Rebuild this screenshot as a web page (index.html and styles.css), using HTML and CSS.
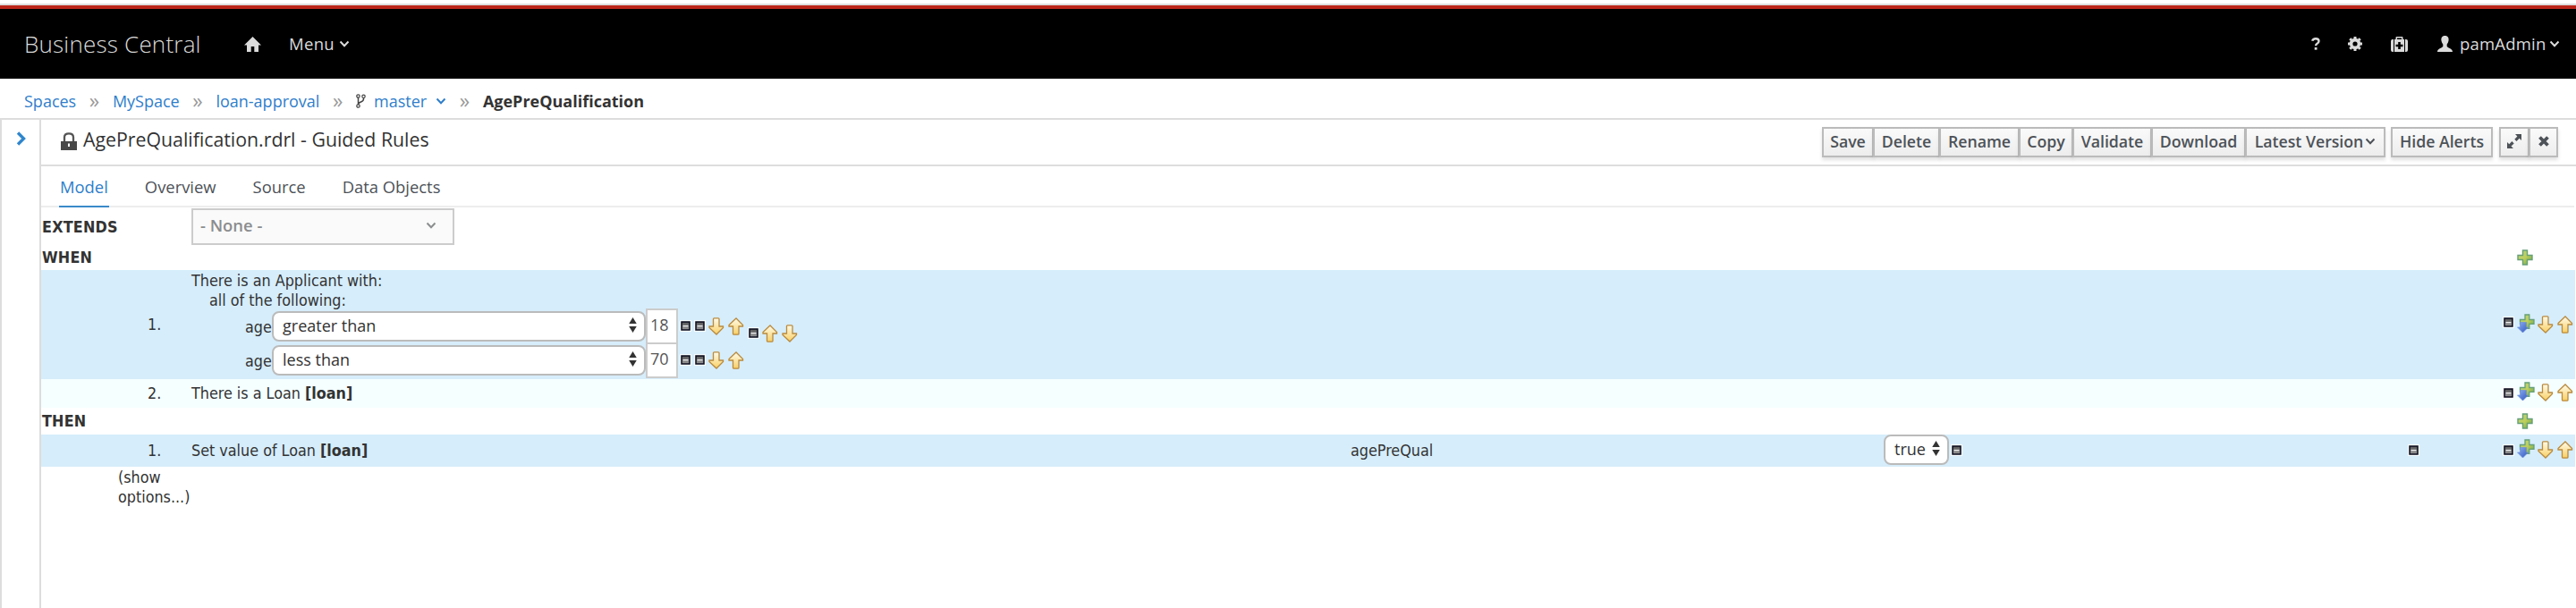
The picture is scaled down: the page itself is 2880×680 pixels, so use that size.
FILE: index.html
```html
<!DOCTYPE html>
<html lang="en">
<head>
<meta charset="utf-8">
<title>Business Central</title>
<link rel="stylesheet" href="styles.css">
</head>
<body>
<svg width="0" height="0" class="defs">
  <defs>
    <linearGradient id="gold" x1="0" y1="0" x2="0" y2="1"><stop offset="0" stop-color="#fffbea"/><stop offset="1" stop-color="#f8cf63"/></linearGradient>
    <linearGradient id="green" x1="0" y1="0" x2="1" y2="1"><stop offset="0" stop-color="#b5d282"/><stop offset=".5" stop-color="#bfcf5a"/><stop offset="1" stop-color="#5fa04c"/></linearGradient>
    <linearGradient id="blue" x1="0" y1="0" x2="1" y2="1"><stop offset="0" stop-color="#8fb0ee"/><stop offset="1" stop-color="#2f55c0"/></linearGradient>
    <linearGradient id="steel" x1="0" y1="0" x2="0" y2="1"><stop offset="0" stop-color="#555"/><stop offset="1" stop-color="#999"/></linearGradient>
    <symbol id="chev" viewBox="0 0 12 8"><path d="M1.500 1.500 6 6.200l4.500-4.700" fill="none" stroke="currentColor" stroke-width="2"/></symbol>
    <symbol id="minus" viewBox="0 0 13 13"><path fill="#fff" fill-opacity=".8" d="M0 0h13v13H0z"/><path fill="url(#steel)" stroke="#0a0a1c" stroke-width="1.500" d="M2 2h9v9H2z"/><path fill="#eee" d="M3.500 6h6v1.300h-6z"/></symbol>
    <symbol id="down" viewBox="0 0 18 20"><path d="M5.500 1.800q0-1 1-1h4.500q1 0 1 1V10h4.500v1.500L9 19 1 11.500V10h4.500z" fill="url(#gold)" stroke="#b98a3e" stroke-width="1.300"/></symbol>
    <symbol id="up" viewBox="0 0 18 20"><path d="M5.500 18.200q0 1 1 1h4.500q1 0 1-1V10h4.500V8.500L9 1 1 8.500V10h4.500z" fill="url(#gold)" stroke="#b98a3e" stroke-width="1.300"/></symbol>
    <symbol id="plus" viewBox="0 0 18 18"><path d="M6.500 1h5v5.500H17v5h-5.500V17h-5v-5.500H1v-5h5.500z" fill="url(#green)" stroke="#65a078" stroke-width="1.400"/></symbol>
    <symbol id="plusdown" viewBox="0 0 20 22"><path d="M9 1h4.800v5.500H19v4.800h-5.200v5H9v-5H3.500V6.500H9z" fill="url(#green)" stroke="#65a078" stroke-width="1.300"/><path d="M3.500 9.500h7V15h2L6.500 21 .5 15h3z" fill="url(#blue)" stroke="#6f8fdc" stroke-width=".7"/></symbol>
    <symbol id="spin" viewBox="0 0 9 18"><path d="M4.500 0 9 7.500H0zM4.500 18 9 10.500H0z" fill="#333"/></symbol>
  </defs>
</svg>
<header class="masthead">
  <span class="brand">Business Central</span>
  <svg class="home" viewBox="0 0 19 17"><path d="M9.500 0 19 9.500h-3V17h-4.700v-6H7.700v6H3V9.500H0z"/></svg>
  <span class="menu">Menu</span><svg class="chev menu-chev"><use href="#chev"/></svg>
  <div class="tools">
    <svg class="help" viewBox="0 0 10 14"><path d="M1.200 3.800Q1.800 1.200 5 1.200q3.500 0 3.500 2.800 0 1.700-1.900 2.700-1.500.8-1.500 2.500" fill="none" stroke="currentColor" stroke-width="2.400"/><path d="M3.700 11h2.800v2.700H3.700z"/></svg>
    <svg class="gear" viewBox="0 0 16 16"><circle cx="8" cy="8" r="4.400" fill="none" stroke="currentColor" stroke-width="3.600"/><path d="M8 0v3M8 13v3M0 8h3M13 8h3M2.300 2.300l2 2M11.700 11.700l2 2M2.300 13.700l2-2M11.700 4.300l2-2" stroke="currentColor" stroke-width="3"/></svg>
    <svg class="medkit" viewBox="0 0 19 17"><path fill-rule="evenodd" d="M4 3h1.500V1q0-1 1-1h6q1 0 1 1v2H15v14H4zM7 1.500V3h5V1.500zM8.200 6v2.700H5.500v2.600h2.700V14h2.600v-2.700h2.700V8.700h-2.700V6z"/><path d="M3 3v14H2q-2 0-2-2V5q0-2 2-2zM16 3v14h1q2 0 2-2V5q0-2-2-2z"/></svg>
    <svg class="user" viewBox="0 0 17 18"><path d="M8.500 0C12 0 13 2.500 12.500 5.500c-.3 2-1.200 3-1.800 4V12c1.300 1.700 6.300 2.300 6.300 6H0c0-3.700 5-4.300 6.300-6V9.500c-.6-1-1.500-2-1.800-4C4 2.500 5 0 8.500 0z"/></svg>
    <span class="username">pamAdmin</span><svg class="chev"><use href="#chev"/></svg>
  </div>
</header>
<nav class="crumbs">
  <a>Spaces</a><i>»</i><a>MySpace</a><i>»</i><a>loan-approval</a><i>»</i>
  <svg class="branch" viewBox="0 0 11 16"><path d="M2.500 4v8M8.500 4v1.500Q8.500 8 5.500 9T2.500 12" fill="none" stroke="#444" stroke-width="1.500"/><g fill="#fff" stroke="#444" stroke-width="1.200"><circle cx="2.500" cy="2.500" r="1.700"/><circle cx="2.500" cy="13.500" r="1.700"/><circle cx="8.500" cy="2.800" r="1.700"/></g></svg>
  <a>master</a><svg class="chev crumb-chev"><use href="#chev"/></svg><i>»</i><b>AgePreQualification</b>
</nav>
<div class="workspace">
  <aside class="rail"><svg viewBox="0 0 11 16"><path d="M2 1.500 8.500 8 2 14.500" fill="none" stroke="#2f86cc" stroke-width="3.400"/></svg></aside>
  <main class="editor">
    <div class="titlebar">
      <svg class="lock" viewBox="0 0 18 20"><path d="M4 10V5.500Q4 1.300 9 1.300t5 4.200V10" fill="none" stroke="#555" stroke-width="2.300"/><path fill="#484848" d="M0 10h18v10H0z"/><path fill="#fff" d="M8 12.500h2V16H8z"/></svg>
      <h1>AgePreQualification.rdrl - Guided Rules</h1>
      <div class="actions">
        <button class="w-save">Save</button><button class="w-delete">Delete</button><button class="w-rename">Rename</button><button class="w-copy">Copy</button><button class="w-validate">Validate</button><button class="w-download">Download</button><button class="w-version">Latest Version<svg class="chev"><use href="#chev"/></svg></button>
        <button class="w-alerts">Hide Alerts</button>
        <button class="w-expand"><svg viewBox="0 0 16 16"><path d="M9 0h7v7l-2.300-2.300-3.200 3.200-2.200-2.200 3.100-3.200zM7 16H0V9l2.300 2.300 3.100-3.200 2.300 2.300-3.200 3.200z"/></svg></button><button class="w-close"><svg viewBox="0 0 12 12"><path d="m1.500 1.500 9 9m0-9-9 9" stroke="currentColor" stroke-width="3.800"/></svg></button>
      </div>
    </div>
    <div class="tabs"><span class="tab active">Model</span><span class="tab">Overview</span><span class="tab">Source</span><span class="tab">Data Objects</span></div>
    <section class="rules">
      <div class="row extends"><b class="heading">EXTENDS</b><div class="picker"><span>- None -</span><svg class="chev"><use href="#chev"/></svg></div></div>
      <div class="row when"><b class="heading">WHEN</b><svg class="plus"><use href="#plus"/></svg></div>
      <div class="row first blue">
        <span class="num">1.</span>
        <div class="pattern">
          <p>There is an Applicant with:</p>
          <p class="all">all of the following:</p>
          <div class="constraint"><span class="fact">age</span><div class="select"><span>greater than</span><svg class="spin"><use href="#spin"/></svg></div><div class="value">18</div><svg class="minus"><use href="#minus"/></svg><svg class="minus"><use href="#minus"/></svg><svg class="arrow"><use href="#down"/></svg><svg class="arrow"><use href="#up"/></svg><div class="group-tools"><svg class="minus"><use href="#minus"/></svg><svg class="arrow"><use href="#up"/></svg><svg class="arrow"><use href="#down"/></svg></div></div>
          <div class="constraint"><span class="fact">age</span><div class="select"><span>less than</span><svg class="spin"><use href="#spin"/></svg></div><div class="value">70</div><svg class="minus"><use href="#minus"/></svg><svg class="minus"><use href="#minus"/></svg><svg class="arrow"><use href="#down"/></svg><svg class="arrow"><use href="#up"/></svg></div>
        </div>
        <div class="row-tools"><svg class="minus"><use href="#minus"/></svg><svg class="plusdown"><use href="#plusdown"/></svg><svg class="arrow"><use href="#down"/></svg><svg class="arrow"><use href="#up"/></svg></div>
      </div>
      <div class="row second"><span class="num">2.</span><p>There is a Loan <b>[loan]</b></p>
        <div class="row-tools"><svg class="minus"><use href="#minus"/></svg><svg class="plusdown"><use href="#plusdown"/></svg><svg class="arrow"><use href="#down"/></svg><svg class="arrow"><use href="#up"/></svg></div>
      </div>
      <div class="row then"><b class="heading">THEN</b><svg class="plus"><use href="#plus"/></svg></div>
      <div class="row action blue"><span class="num">1.</span><p class="target">Set value of Loan <b>[loan]</b></p><p class="field">agePreQual</p><div class="select bool"><span>true</span><svg class="spin"><use href="#spin"/></svg></div><svg class="minus after-bool"><use href="#minus"/></svg>
        <div class="row-tools"><svg class="minus lone"><use href="#minus"/></svg><svg class="minus"><use href="#minus"/></svg><svg class="plusdown"><use href="#plusdown"/></svg><svg class="arrow"><use href="#down"/></svg><svg class="arrow"><use href="#up"/></svg></div>
      </div>
      <p class="options">(show options...)</p>
    </section>
  </main>
</div>
</body>
</html>
```
FILE: styles.css
```css
* { box-sizing: border-box; }
body { margin: 0; padding-top: 4px; width: 2880px; height: 680px; overflow: hidden; display: flex; flex-direction: column; background: #fff; color: #333; font: 18px/22px "Open Sans", sans-serif; }
svg { display: block; flex: none; fill: currentColor; }
.defs { position: absolute; }
p { margin: 0; }
button { font: inherit; }
.chev { width: 12px; height: 8px; }

.masthead { height: 84px; flex: none; border-top: 2px solid #ddd; box-shadow: inset 0 4px #bb261a; background: #000; color: #dbdbdb; display: flex; align-items: center; padding: 4px 18px 0 27px; font-size: 18.500px; }
.brand { font-size: 26px; font-weight: 300; width: 246px; white-space: nowrap; letter-spacing: .2px; }
.home { width: 19px; height: 17px; margin-right: 31px; }
.menu { width: 56px; letter-spacing: .3px; }
.tools { margin-left: auto; display: flex; align-items: center; }
.help { width: 10px; height: 14px; margin-right: 31px; }
.gear { width: 16px; height: 16px; margin-right: 32px; }
.medkit { width: 19px; height: 17px; margin-right: 33px; }
.user { width: 17px; height: 18px; margin-right: 8px; }
.username { width: 100px; letter-spacing: .2px; }

.crumbs { height: 44px; flex: none; display: flex; align-items: center; padding: 6px 27px 0; }
.crumbs a { color: #2f7ecb; }
.crumbs i { font-style: normal; color: #999; font-size: 23px; width: 40.700px; text-align: center; padding-bottom: 3px; }
.branch { width: 11px; height: 20px; margin-right: 9px; }
.crumb-chev { color: #2f7ecb; margin-left: 10px; }

.workspace { flex: 1; display: flex; border-top: 2px solid #ddd; border-left: 2px solid #ddd; }
.rail { width: 44px; border-right: 2px solid #ddd; padding: 13px 0 0 16px; }
.rail svg { width: 11px; height: 16px; }
.editor { flex: 1; display: flex; flex-direction: column; }
.titlebar { height: 52px; border-bottom: 2px solid #ddd; display: flex; padding-left: 22px; padding-right: 21px; }
.lock { width: 18px; height: 20px; margin: 14px 7px 0 0; }
h1 { margin: 10px 0 0; font-size: 21.300px; line-height: 24px; font-weight: 400; white-space: nowrap; }
.actions { margin: 8px 0 0 auto; display: flex; height: 34px; }
.actions button { height: 34px; border: 2px solid #bbb; padding: 0 0 3px; margin: 0 -1px 0 0; display: flex; align-items: center; justify-content: center; gap: 2px; color: #4d5258; font-weight: 600; font-size: 17.700px; background: linear-gradient(#fafafa, #ededed); box-shadow: 0 3px 4px rgba(0,0,0,.12); white-space: nowrap; }
.w-save { width: 58px; } .w-delete { width: 75px; } .w-rename { width: 90px; } .w-copy { width: 61px; } .w-validate { width: 89px; } .w-download { width: 106px; } .w-version { width: 157px; }
.actions .w-alerts { width: 114px; margin: 0 7px 0 7px; }
.w-expand { width: 34px; } .w-close { width: 33px; }
.w-expand svg { width: 16px; height: 16px; } .w-close svg { width: 12px; height: 12px; }

.tabs { height: 46px; border-bottom: 2px solid #ededed; padding-left: 20px; display: flex; gap: 39px; margin-right: 2px; font-size: 18.400px; }
.tab { height: 46px; padding: 12px 1px 0; color: #4d5258; }
.tab.active { color: #2f7ecb; border-bottom: 2px solid #3a8aca; }

.rules { font-family: "DejaVu Sans Condensed", "DejaVu Sans", sans-serif; font-size: 17.800px; font-stretch: condensed; }
.row { display: flex; align-items: center; margin-right: 1px; }
.blue { background: #d6edfb; }
.heading { width: 168px; padding-left: 1px; letter-spacing: .2px; }
.extends { height: 44px; }
.picker { width: 294px; height: 41px; margin-top: -1px; border: 2px solid #ccc; background: #fafafa; color: #8b8d8f; display: flex; justify-content: space-between; align-items: center; padding: 0 18px 3px 8px; font: 600 18.400px/22px "Open Sans", sans-serif; }
.when { height: 26px; padding-bottom: 3px; }
.plus { width: 18px; height: 18px; margin-left: auto; margin-right: 47px; }
.first { height: 122px; }
.num { width: 168px; padding-left: 119px; flex: none; }
.pattern { align-self: stretch; padding-top: 1px; white-space: nowrap; }
.all { padding-left: 20px; }
.constraint { display: flex; align-items: center; height: 38px; padding-left: 60px; width: 740px; }
.fact { width: 30px; flex: none; }
.constraint > .minus { margin-right: 3px; margin-top: -3px; }
.constraint > .arrow { margin-top: -2px; }
.value { width: 36px; height: 40px; margin: -2px 2px 0 0; flex: none; border: 2px solid #ccc; background: #fff; color: #555; font: 18px/33px "Open Sans", sans-serif; padding-left: 3px; }
.select { width: 418px; height: 34px; flex: none; margin-top: -2px; border: 2px solid #bbb; border-radius: 8px; background: #fff; display: flex; align-items: center; justify-content: space-between; padding: 0 8px 3px 10px; font: 18px/22px "Open Sans", sans-serif; }
.spin { width: 9px; height: 17px; }
.minus { width: 13px; height: 13px; }
.arrow { width: 18px; height: 20px; margin-right: 4px; }
.group-tools { display: flex; align-items: center; margin-top: 14px; }
.group-tools .minus { margin-right: 3px; margin-top: -1px; }
.row-tools { display: flex; align-items: center; margin-left: auto; margin-right: -2px; }
.row-tools .minus { margin-right: 3px; }
.first .row-tools .minus { margin-top: -5px; }
.plusdown { width: 20px; height: 22px; margin: -2px 3px 0 0; }
.second { height: 32px; background: #f5ffff; }
.second .row-tools, .action .row-tools { margin-top: -2px; }
.then { height: 30px; }
.action { height: 36px; }
.target { width: 1296px; }
.field { width: 596px; }
.bool { width: 73px; margin-right: 2px; }
.after-bool { margin-top: -2px; }
.row-tools .lone { margin-right: 93px; }
.options { width: 85px; padding: 1px 0 0 0; margin-left: 86px; }
```
